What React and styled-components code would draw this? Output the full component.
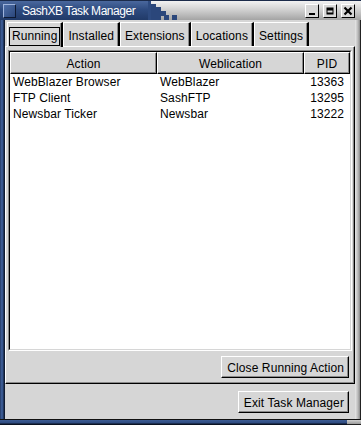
import React from 'react';
import styled, { createGlobalStyle } from 'styled-components';

const GlobalStyle = createGlobalStyle`
  html, body { margin: 0; padding: 0; background: #d6d6d6; }
  body {
    font-family: "Liberation Sans", Arial, sans-serif;
    font-size: 12px;
    color: #000;
  }
  * { box-sizing: border-box; }
`;

const BG = '#d6d6d6';

const Window = styled.div`
  width: 361px;
  height: 425px;
  display: flex;
  flex-direction: column;
  background: ${BG};
  overflow: hidden;
  letter-spacing: 0.1px;
`;

const TitleBar = styled.div`
  height: 20px;
  flex: none;
  display: flex;
  align-items: stretch;
  background: linear-gradient(to bottom, #f2f2f2 0%, #d2d2d2 45%, #a4a4a4 100%);
  border-top: 1px solid #1b2b4a;
`;

const TitleBlue = styled.div`
  width: 148px;
  flex: none;
  display: flex;
  align-items: center;
  gap: 6px;
  padding-left: 3px;
  background: linear-gradient(to bottom, #4a689e 0%, #2e4b80 45%, #213a68 100%);
`;

const AppIcon = styled.div`
  width: 13px;
  height: 14px;
  flex: none;
  background: linear-gradient(135deg, #4f6fa8, #2a467a);
  border: 1px solid;
  border-color: #9fb4dc #0e1a33 #0e1a33 #9fb4dc;
`;

const TitleText = styled.span`
  flex: none;
  color: #fff;
  font-size: 12px;
  letter-spacing: -0.45px;
  white-space: nowrap;
  padding-top: 1px;
`;

const Steps = styled.svg`
  flex: none;
  display: block;
`;

const Spacer = styled.div`
  flex: 1;
`;

const TitleButtons = styled.div`
  display: flex;
  align-items: center;
  gap: 4px;
  padding-right: 6px;
`;

const TitleButton = styled.div`
  width: 14px;
  height: 14px;
  background: #d8d8d8;
  border: 1px solid;
  border-color: #ffffff #000000 #000000 #ffffff;
  display: flex;
  align-items: center;
  justify-content: center;
`;

const Middle = styled.div`
  flex: 1;
  display: flex;
  min-height: 0;
`;

const LeftFrame = styled.div`
  width: 5px;
  flex: none;
  background: linear-gradient(to right, #1a2c52 0px, #3d5c94 1px, #34538a 3px, #0f1a30 4px);
`;

const RightFrame = styled.div`
  width: 6px;
  flex: none;
  background: linear-gradient(to right, #e8e8e8 0px, #b8b8b8 3px, #8a8a8a 5px, #222 5px);
`;

const BottomFrame = styled.div`
  height: 6px;
  flex: none;
  display: flex;
  background: linear-gradient(to bottom, #111 0px, #111 1px, #3d5c94 1px, #2e4b80 4px, #0b1222 5px);
`;

const BottomGray = styled.div`
  margin-left: auto;
  width: 14px;
  background: linear-gradient(to bottom, #111 0px, #111 1px, #d0d0d0 1px, #9a9a9a 5px, #222 5px);
`;

const Client = styled.div`
  flex: 1;
  display: flex;
  flex-direction: column;
  padding-top: 2px;
  background: ${BG};
  min-width: 0;
`;

const TabRow = styled.div`
  height: 24px;
  flex: none;
  display: flex;
  align-items: stretch;
  padding-left: 2px;
  position: relative;
`;

const Tab = styled.div`
  position: relative;
  z-index: ${p => (p.$active ? 2 : 1)};
  display: flex;
  align-items: center;
  justify-content: center;
  padding: 2px 4px 0 4px;
  margin-bottom: ${p => (p.$active ? '-1px' : '0')};
  background: ${BG};
  border-top: 1px solid #fff;
  border-left: 1px solid #fff;
  border-right: 2px solid #000;
  box-shadow: inset -1px 0 0 #8a8a8a;
  white-space: nowrap;
`;

const FocusRect = styled.span`
  border: 1px solid #000;
  padding: 1px 2px 2px 2px;
  margin: 0 -3px;
`;

const Page = styled.div`
  flex: none;
  height: 338px;
  display: flex;
  flex-direction: column;
  border: 1px solid;
  border-color: #fff #000 #000 #fff;
  box-shadow: inset -1px -1px 0 #8a8a8a;
  padding: 3px 2px 0 2px;
`;

const ListFrame = styled.div`
  height: 301px;
  flex: none;
  background: #fff;
  border: 1px solid;
  border-color: #8a8a8a #fff #fff #8a8a8a;
  display: flex;
  flex-direction: column;
`;

const ListInner = styled.div`
  flex: 1;
  border: 1px solid;
  border-color: #000 ${BG} ${BG} #000;
  display: flex;
  flex-direction: column;
  overflow: hidden;
`;

const Columns = '147px 147px 1fr';

const HeaderRow = styled.div`
  display: grid;
  grid-template-columns: ${Columns};
  height: 22px;
  flex: none;
`;

const HeaderCell = styled.div`
  background: ${BG};
  border: 1px solid;
  border-color: #fff #000 #000 #fff;
  box-shadow: inset -1px -1px 0 #8a8a8a;
  display: flex;
  align-items: center;
  justify-content: center;
  padding-top: 1px;
`;

const Row = styled.div`
  display: grid;
  grid-template-columns: ${Columns};
  height: 16px;
  line-height: 16px;
  &:first-of-type { margin-top: 1px; }
`;

const Cell = styled.div`
  padding: 0 ${p => (p.$right ? '6px' : '4px')} 0 ${p => (p.$right ? '0' : '3px')};
  text-align: ${p => (p.$right ? 'right' : 'left')};
  white-space: nowrap;
  overflow: hidden;
`;

const ButtonBar = styled.div`
  flex: 1;
  display: flex;
  justify-content: flex-end;
  align-items: flex-start;
  padding: ${p => p.$pad};
`;

const Button = styled.div`
  height: 22px;
  display: flex;
  align-items: center;
  padding: 1px 4px 0 5px;
  background: ${BG};
  border: 1px solid;
  border-color: #fff #000 #000 #fff;
  box-shadow: inset -1px -1px 0 #8a8a8a;
  white-space: nowrap;
`;

const rows = [
  ['WebBlazer Browser', 'WebBlazer', '13363'],
  ['FTP Client', 'SashFTP', '13295'],
  ['Newsbar Ticker', 'Newsbar', '13222'],
];

const tabs = ['Running', 'Installed', 'Extensions', 'Locations', 'Settings'];

function StepsArt() {
  const c = '#2b477b';
  return (
    <Steps width="40" height="19" viewBox="0 0 40 19">
      <rect x="0" y="0" width="3" height="19" fill="#2e4b80" />
      <rect x="3" y="3" width="5" height="16" fill={c} />
      <rect x="8" y="6" width="5" height="5" fill={c} />
      <rect x="6" y="11" width="7" height="8" fill={c} />
      <rect x="13" y="10" width="5" height="5" fill={c} />
      <rect x="16" y="14" width="5" height="5" fill={c} />
      <rect x="24" y="14" width="5" height="5" fill={c} />
    </Steps>
  );
}

export default function App() {
  return (
    <>
      <GlobalStyle />
      <Window>
        <TitleBar>
          <TitleBlue>
            <AppIcon />
            <TitleText>SashXB Task Manager</TitleText>
          </TitleBlue>
          <StepsArt />
          <Spacer />
          <TitleButtons>
            <TitleButton>
              <svg width="10" height="10" viewBox="0 0 10 10">
                <rect x="2" y="7" width="6" height="2" fill="#000" />
              </svg>
            </TitleButton>
            <TitleButton>
              <svg width="10" height="10" viewBox="0 0 10 10">
                <rect x="1.5" y="1.5" width="7" height="7" fill="#000" />
                <rect x="2.5" y="4.5" width="5" height="2" fill="#d8d8d8" />
              </svg>
            </TitleButton>
            <TitleButton>
              <svg width="10" height="10" viewBox="0 0 10 10">
                <path d="M1.5 1.5 L8.5 8.5 M8.5 1.5 L1.5 8.5" stroke="#000" strokeWidth="2.2" />
              </svg>
            </TitleButton>
          </TitleButtons>
        </TitleBar>
        <Middle>
          <LeftFrame />
          <Client>
            <TabRow>
              {tabs.map((t, i) => (
                <Tab key={t} $active={i === 0}>
                  {i === 0 ? <FocusRect>{t}</FocusRect> : t}
                </Tab>
              ))}
            </TabRow>
            <Page>
              <ListFrame>
                <ListInner>
                  <HeaderRow>
                    <HeaderCell>Action</HeaderCell>
                    <HeaderCell>Weblication</HeaderCell>
                    <HeaderCell>PID</HeaderCell>
                  </HeaderRow>
                  {rows.map(r => (
                    <Row key={r[2]}>
                      <Cell>{r[0]}</Cell>
                      <Cell>{r[1]}</Cell>
                      <Cell $right>{r[2]}</Cell>
                    </Row>
                  ))}
                </ListInner>
              </ListFrame>
              <ButtonBar $pad="5px 3px 0 0">
                <Button>Close Running Action</Button>
              </ButtonBar>
            </Page>
            <ButtonBar $pad="7px 6px 0 0">
              <Button>Exit Task Manager</Button>
            </ButtonBar>
          </Client>
          <RightFrame />
        </Middle>
        <BottomFrame>
          <BottomGray />
        </BottomFrame>
      </Window>
    </>
  );
}
